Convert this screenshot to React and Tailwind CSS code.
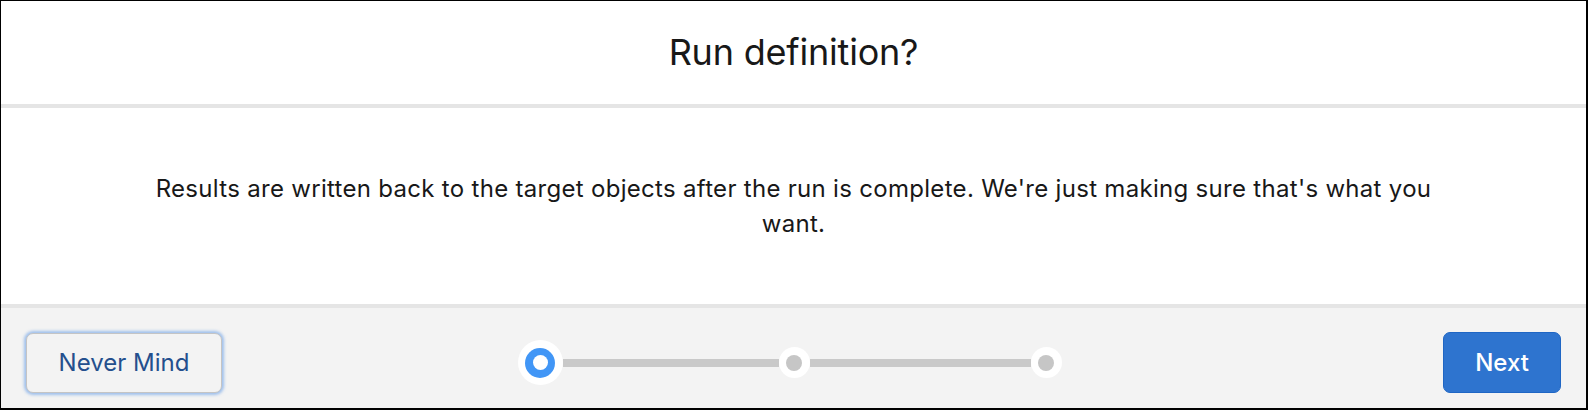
export default function App() {
  const font = { fontFamily: 'Inter, "Noto Sans", sans-serif' };
  return (
    <div className="w-[1588px] h-[410px] bg-white text-[#181818]" style={font}>
      <div className="h-full flex flex-col border-t border-l border-r-2 border-b-2 border-black">
        <div className="h-[103px] flex items-center justify-center pb-[2px]">
          <h1 className="text-[36px] leading-none tracking-[-0.2px] font-normal">Run definition?</h1>
        </div>
        <div className="h-[4px] bg-[#e5e5e5]" />
        <div className="h-[196px] flex items-center justify-center">
          <p className="w-[1300px] text-center text-[24px] leading-[35px] tracking-[0.3px]">
            Results are written back to the target objects after the run is complete. We're just making sure that's what you want.
          </p>
        </div>
        <div className="h-[4px] bg-[#e5e5e5]" />
        <div className="flex-1 bg-[#f3f3f3] grid grid-cols-[1fr_auto_1fr] items-center px-[25px] pt-[9px]">
          <div className="flex justify-start">
            <button className="w-[196px] h-[60px] rounded-[7px] border border-[#c4c4c4] bg-[#f3f3f3] text-[#244f8d] text-[24px] shadow-[0_0_3px_2px_rgba(90,150,230,0.55)]">
              Never Mind
            </button>
          </div>
          <div className="flex items-center mr-[8px]">
            <div className="w-[45px] h-[45px] rounded-full bg-white flex items-center justify-center">
              <div className="w-[30px] h-[30px] rounded-full bg-[#4196f6] flex items-center justify-center">
                <div className="w-[15px] h-[15px] rounded-full bg-white" />
              </div>
            </div>
            <div className="w-[216px] h-[8px] bg-[#c9c9c9]" />
            <div className="w-[31px] h-[31px] rounded-full bg-white flex items-center justify-center">
              <div className="w-[16px] h-[16px] rounded-full bg-[#c6c6c6]" />
            </div>
            <div className="w-[221px] h-[8px] bg-[#c9c9c9]" />
            <div className="w-[31px] h-[31px] rounded-full bg-white flex items-center justify-center">
              <div className="w-[16px] h-[16px] rounded-full bg-[#c6c6c6]" />
            </div>
          </div>
          <div className="flex justify-end">
            <button className="w-[118px] h-[61px] rounded-[7px] border border-[#1f66c4] bg-[#2e74cf] text-white text-[24px] font-medium">
              Next
            </button>
          </div>
        </div>
      </div>
    </div>
  );
}
